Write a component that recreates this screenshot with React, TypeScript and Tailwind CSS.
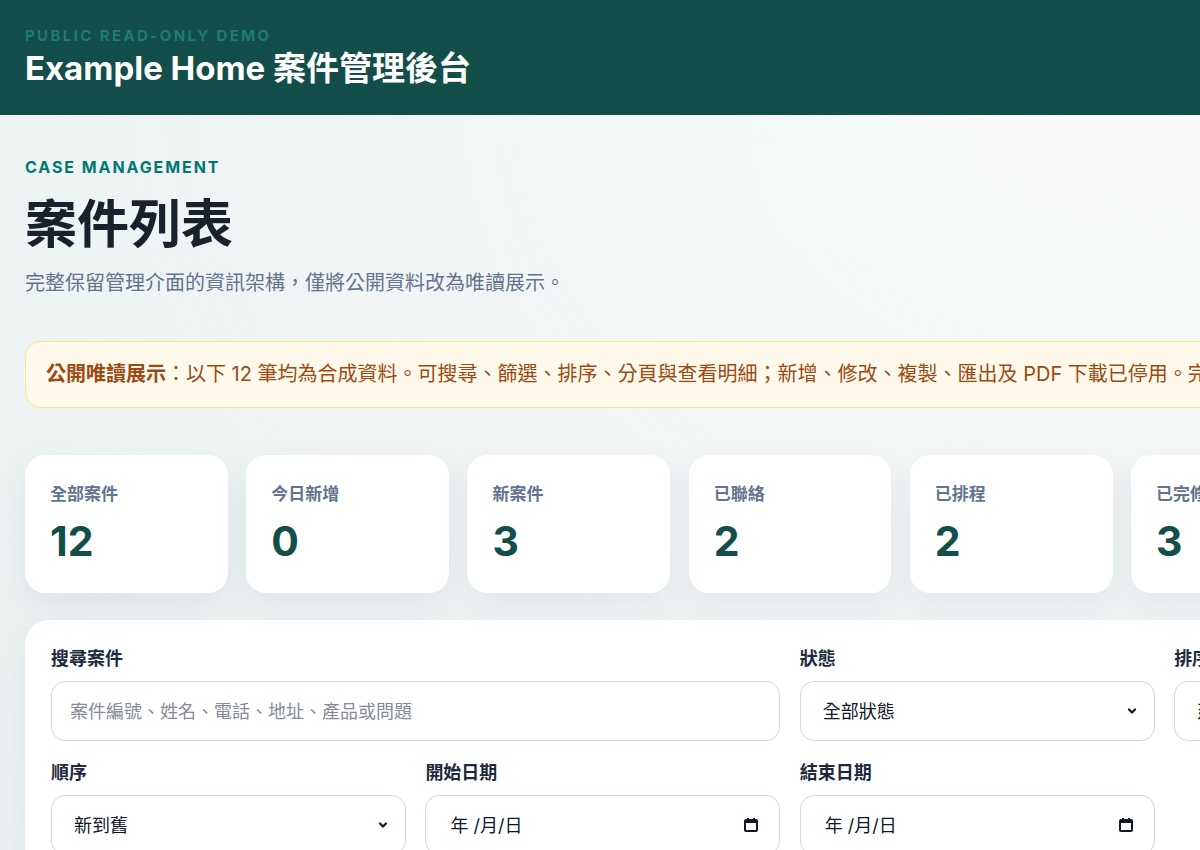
import React from 'react';

const font = "font-['Inter','Noto_Sans_CJK_TC',sans-serif]";

const stats = [
  { label: '全部案件', value: 12 },
  { label: '今日新增', value: 0 },
  { label: '新案件', value: 3 },
  { label: '已聯絡', value: 2 },
  { label: '已排程', value: 2 },
  { label: '已完修', value: 3 },
  { label: '已結案', value: 2 },
];

const Chevron: React.FC = () => (
  <svg width="12" height="12" viewBox="0 0 12 12" className="text-gray-900">
    <path d="M3 4.5 6 7.5l3-3" fill="none" stroke="currentColor" strokeWidth="2.2" strokeLinecap="round" strokeLinejoin="round" />
  </svg>
);

const CalendarGlyph: React.FC = () => (
  <svg width="16" height="16" viewBox="0 0 16 16" className="text-gray-900">
    <rect x="2" y="3" width="12" height="11" rx="1" fill="none" stroke="currentColor" strokeWidth="2" />
    <rect x="2" y="3" width="12" height="3" fill="currentColor" />
    <rect x="4" y="1" width="2" height="3" fill="currentColor" />
    <rect x="10" y="1" width="2" height="3" fill="currentColor" />
  </svg>
);

const Field: React.FC<{ label: string; className?: string; children: React.ReactNode }> = ({ label, className, children }) => (
  <div className={'flex flex-col ' + (className ?? '')}>
    <label className="text-[18px] leading-[22px] font-bold text-slate-800 mb-[11px]">{label}</label>
    {children}
  </div>
);

const boxCls = 'h-[60px] rounded-[14px] border border-gray-300 bg-white flex items-center text-[18px]';

const SelectBox: React.FC<{ value: string }> = ({ value }) => (
  <div className={boxCls + ' pl-[22px] pr-[16px] justify-between text-gray-900'}>
    <span>{value}</span>
    <Chevron />
  </div>
);

const DateBox: React.FC = () => (
  <div className={boxCls + ' pl-[24px] pr-[20px] justify-between text-gray-900'}>
    <span>年 /月/日</span>
    <CalendarGlyph />
  </div>
);

export default function App() {
  return (
    <div className={`${font} w-full min-h-[850px] overflow-hidden bg-[#f1f5f6]`}>
      <div className="w-[1580px]">
        <header className="h-[115px] bg-[#134e4a] px-[25px] pt-[26px]">
          <div className="text-[15px] leading-[20px] font-bold tracking-[0.16em] text-[#1c7c6f]">PUBLIC READ-ONLY DEMO</div>
          <h1 className="mt-[2px] text-[33px] leading-[40px] font-bold text-white">Example Home 案件管理後台</h1>
        </header>

        <main className="px-[25px] pt-[42px] pb-10 bg-[radial-gradient(ellipse_at_70%_0%,#f8fafb_0%,#f1f5f6_45%,#eaf0f1_100%)]">
          <div className="text-[16px] leading-[20px] font-bold tracking-[0.12em] text-teal-700">CASE MANAGEMENT</div>
          <h2 className="mt-[17px] text-[52px] leading-[62px] font-bold text-[#1a202c]">案件列表</h2>
          <p className="mt-[12px] text-[20px] leading-[30px] text-slate-500">完整保留管理介面的資訊架構，僅將公開資料改為唯讀展示。</p>

          <div className="mt-[43px] rounded-[16px] border border-amber-200 bg-[#fff9eb] px-[20px] py-[19px] text-[20px] leading-[27px] text-[#9a4a12] whitespace-nowrap">
            <strong className="font-bold">公開唯讀展示</strong>：以下 12 筆均為合成資料。可搜尋、篩選、排序、分頁與查看明細；新增、修改、複製、匯出及 PDF 下載已停用。完整功能請於授權環境中使用。
          </div>

          <div className="mt-[47px] grid grid-cols-7 gap-[18.5px]">
            {stats.map((s) => (
              <div key={s.label} className="h-[138px] rounded-[20px] bg-white px-[25px] pt-[27px] shadow-[0_12px_32px_rgba(15,40,50,0.07)]">
                <div className="text-[17px] leading-[24px] font-semibold text-slate-500">{s.label}</div>
                <div className="mt-[11px] text-[41px] leading-[48px] font-bold text-[#134e4a]">{s.value}</div>
              </div>
            ))}
          </div>

          <div className="mt-[27px] rounded-[24px] bg-white px-[26px] pt-[28px] pb-[28px] shadow-[0_12px_32px_rgba(15,40,50,0.07)]">
            <div className="grid grid-cols-4 gap-x-[19.5px] gap-y-[21px]">
              <Field label="搜尋案件" className="col-span-2">
                <div className={boxCls + ' px-[18px] text-[#868b94]'}>案件編號、姓名、電話、地址、產品或問題</div>
              </Field>
              <Field label="狀態">
                <SelectBox value="全部狀態" />
              </Field>
              <Field label="排序依據">
                <SelectBox value="建立時間" />
              </Field>
              <Field label="順序">
                <SelectBox value="新到舊" />
              </Field>
              <Field label="開始日期">
                <DateBox />
              </Field>
              <Field label="結束日期">
                <DateBox />
              </Field>
            </div>
          </div>
        </main>
      </div>
    </div>
  );
}
